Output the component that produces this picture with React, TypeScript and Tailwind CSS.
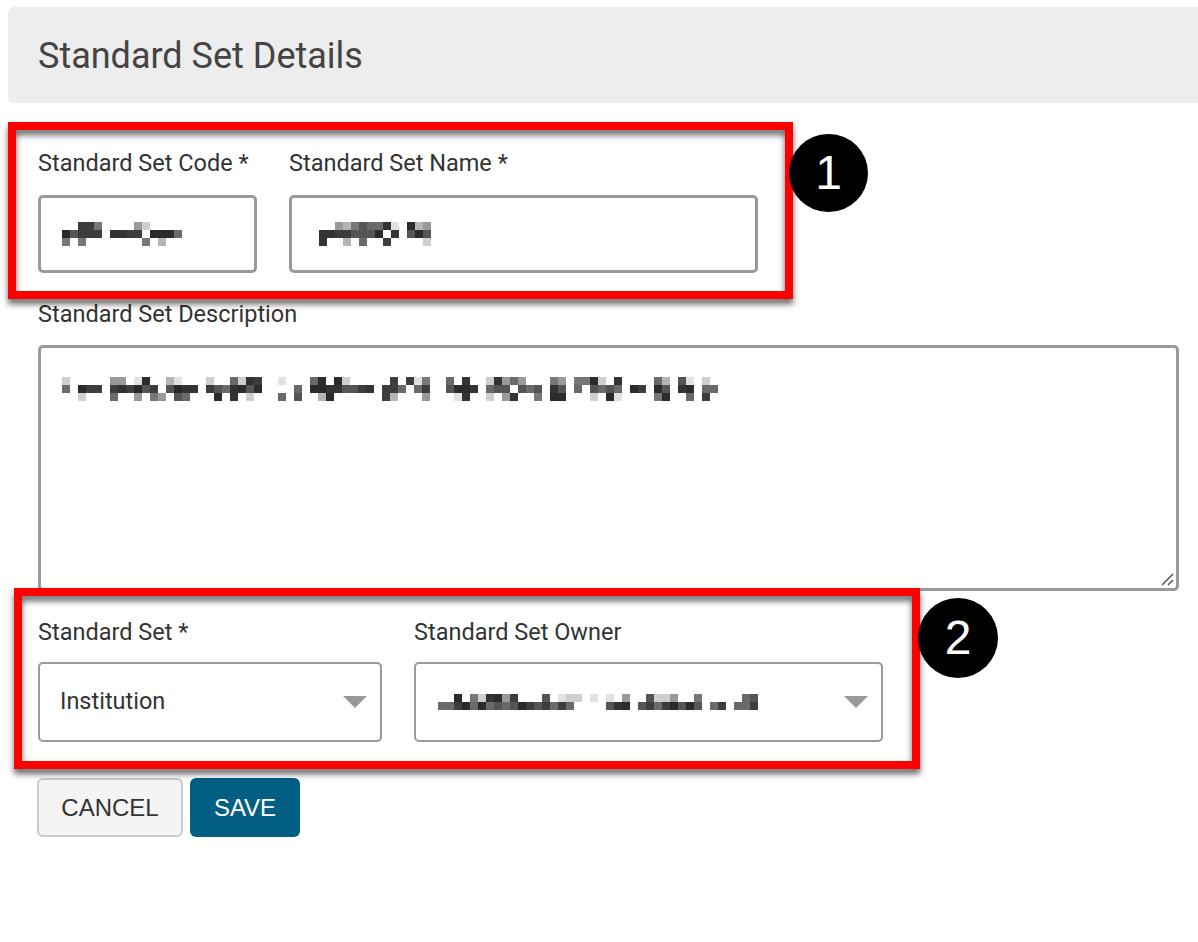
import React from "react";

// blurred / pixelated placeholder values, drawn as blocks
function Mosaic({ seed, width, rows = 3, cell = 7 }: { seed: number; width: number; rows?: number; cell?: number }) {
    let s = seed;
    const rnd = () => {
        s = (s * 9301 + 49297) % 233280;
        return s / 233280;
    };
    const dark = ["#2b2b2b", "#333", "#3d3d3d", "#555", "#6a6a6a"];
    const light = ["#777", "#999", "#b5b5b5", "#cfcfcf", "#e2e2e2"];
    const cols = Math.floor(width / cell);
    const rects: React.ReactNode[] = [];
    for (let c = 0; c < cols; c++) {
        const gap = rnd() < 0.16;
        for (let r = 0; r < rows; r++) {
            if (gap) continue;
            const p = rnd();
            const mid = r === Math.floor(rows / 2);
            const keep = mid ? p < 0.88 : r === 0 ? p < 0.55 : p < 0.45;
            if (!keep) continue;
            const shade = mid || rnd() < 0.4 ? dark[Math.floor(rnd() * dark.length)] : light[Math.floor(rnd() * light.length)];
            rects.push(<rect key={`${c}-${r}`} x={c * cell} y={r * cell} width={cell} height={cell} fill={shade} />);
        }
    }
    return (
        <svg width={cols * cell} height={rows * cell} className="block">
            {rects}
        </svg>
    );
}

function Caret() {
    return (
        <svg width="24" height="12" viewBox="0 0 24 12" className="shrink-0">
            <path d="M0 0 L24 0 L12 12 Z" fill="#999" />
        </svg>
    );
}

export default function App() {
    return (
        <div className="relative w-[1198px] h-[942px] bg-white overflow-hidden font-['Roboto',sans-serif] text-[#333]">
            <div className="pt-[7px] pl-2">
                <div className="h-[96px] bg-[#ededed] rounded-l-[6px] flex items-center pl-[30px] pt-[2px] text-[36px] text-[#444]">
                    Standard Set Details
                </div>
            </div>

            <div className="pl-[38px] pr-[19px]">
                <div className="flex gap-[32px] mt-[47px]">
                    <div className="flex flex-col">
                        <label className="text-[23.5px] leading-[26px] h-[26px]">Standard Set Code *</label>
                        <div className="mt-[19px] w-[219px] h-[78px] border-[3px] border-[#999] rounded-[5px] flex items-center pl-[21px]">
                            <Mosaic seed={11} width={120} cell={8} />
                        </div>
                    </div>
                    <div className="flex flex-col">
                        <label className="text-[23.5px] leading-[26px] h-[26px]">Standard Set Name *</label>
                        <div className="mt-[19px] w-[469px] h-[78px] border-[3px] border-[#999] rounded-[5px] flex items-center pl-[19px]">
                            <Mosaic seed={47} width={128} cell={8} />
                        </div>
                    </div>
                </div>

                <label className="block mt-[28px] text-[23.5px] leading-[26px] h-[26px]">Standard Set Description</label>
                <div className="relative mt-[18px] w-[1141px] h-[246px] border-[3px] border-[#999] rounded-[5px] pl-[21px] pt-[29px]">
                    <Mosaic seed={93} width={665} rows={3} cell={8} />
                    <svg width="14" height="14" viewBox="0 0 14 14" className="absolute right-[2px] bottom-[2px]">
                        <path d="M2 13 L13 2 M8 13 L13 8" stroke="#555" strokeWidth="1.5" />
                    </svg>
                </div>

                <div className="flex gap-[32px] mt-[28px]">
                    <div className="flex flex-col">
                        <label className="text-[23.5px] leading-[26px] h-[26px]">Standard Set *</label>
                        <div className="mt-[17px] w-[344px] h-[80px] border-2 border-[#999] rounded-[5px] flex items-center justify-between pl-[20px] pr-[13px]">
                            <span className="text-[23.5px]">Institution</span>
                            <Caret />
                        </div>
                    </div>
                    <div className="flex flex-col">
                        <label className="text-[23.5px] leading-[26px] h-[26px]">Standard Set Owner</label>
                        <div className="mt-[17px] w-[469px] h-[80px] border-2 border-[#999] rounded-[5px] flex items-center justify-between pl-[22px] pr-[13px]">
                            <Mosaic seed={29} width={322} rows={2} cell={8} />
                            <Caret />
                        </div>
                    </div>
                </div>

                <div className="flex gap-[7px] mt-[36px] -ml-px font-['Liberation_Sans',Arial,sans-serif]">
                    <button className="w-[146px] h-[59px] bg-[#f4f4f4] border-2 border-[#c9c9c9] rounded-[6px] text-[24px] text-[#333]">
                        CANCEL
                    </button>
                    <button className="w-[110px] h-[59px] bg-[#035e83] rounded-[6px] text-[24px] text-white">
                        SAVE
                    </button>
                </div>
            </div>

            {/* annotation overlays */}
            <div className="absolute left-[8px] top-[122px] w-[785px] h-[177px] border-[8px] border-[#ff0000] drop-shadow-[0_5px_3px_rgba(0,0,0,0.6)]" />
            <div className="absolute left-[789px] top-[134px] w-[79px] h-[78px] rounded-full bg-black flex items-center justify-center text-white text-[48px] font-['Liberation_Sans',Arial,sans-serif]">
                1
            </div>
            <div className="absolute left-[14px] top-[588px] w-[906px] h-[181px] border-[8px] border-[#ff0000] drop-shadow-[0_5px_3px_rgba(0,0,0,0.6)]" />
            <div className="absolute left-[918px] top-[598px] w-[80px] h-[80px] rounded-full bg-black flex items-center justify-center text-white text-[48px] font-['Liberation_Sans',Arial,sans-serif]">
                2
            </div>
        </div>
    );
}
